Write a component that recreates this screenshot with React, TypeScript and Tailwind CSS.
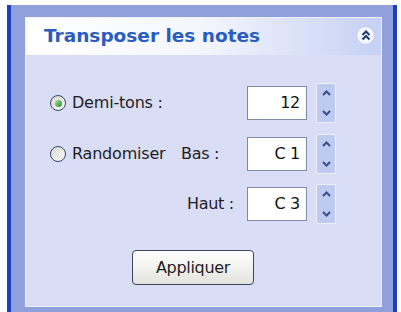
import React from 'react';

const font = { fontFamily: '"DejaVu Sans", Verdana, sans-serif' };

const Chevron = ({ up }: { up?: boolean }) => (
  <svg width="9" height="6" viewBox="0 0 9 6">
    <path
      d={up ? 'M1 5 L4.5 1.5 L8 5' : 'M1 1 L4.5 4.5 L8 1'}
      fill="none"
      stroke="#3a4d8f"
      strokeWidth="2"
    />
  </svg>
);

const Spinner = () => (
  <div className="flex h-[40px] w-[20px] flex-col items-center justify-between rounded-[2px] border border-[#eef1fc] bg-[#bfcaf0] py-[6px]">
    <Chevron up />
    <Chevron />
  </div>
);

const Field = ({ value }: { value: string }) => (
  <div className="flex items-center gap-[9px]">
    <div className="flex h-[34px] w-[60px] items-center justify-end border border-[#7f8aa3] bg-white pr-[6px] text-[16px] tracking-[-0.3px] text-[#111]">
      {value}
    </div>
    <Spinner />
  </div>
);

const Radio = ({ checked, label }: { checked?: boolean; label: string }) => (
  <div className="flex items-center gap-[6px]">
    <div className="flex h-[16px] w-[16px] items-center justify-center rounded-full border-[1.5px] border-[#2f4a6e] bg-gradient-to-br from-[#d8d8d0] to-white">
      {checked && <div className="h-[7px] w-[7px] rounded-full bg-gradient-to-br from-[#9be49b] to-[#1f8f1f]" />}
    </div>
    <span className="text-[16px] tracking-[-0.2px] text-[#1e1e1e]">{label}</span>
  </div>
);

export default function App() {
  return (
    <div className="h-[312px] w-[401px] overflow-hidden bg-white pt-[5px] pl-[7px]" style={font}>
      <div className="h-[320px] w-[390px] border-x-4 border-[#1d3fc2] bg-[#8fa0dc] pt-[12px] pl-[14px] pr-[11px]">
        <div className="border border-[#eef0fb]">
          <div className="flex h-[37px] items-center justify-between bg-gradient-to-r from-white via-[#f4f6fd] to-[#c5d0f3] pl-[18px] pr-[6px]">
            <span className="-mt-[2px] text-[18.5px] font-bold text-[#2a5cc0]">Transposer les notes</span>
            <div className="-mt-[2px] flex h-[19px] w-[19px] items-center justify-center rounded-full border border-[#bfcaea] bg-[#f5f7ff]">
              <svg width="10" height="11" viewBox="0 0 10 11">
                <path d="M1.5 5 L5 1.5 L8.5 5 M1.5 9.5 L5 6 L8.5 9.5" fill="none" stroke="#1d3677" strokeWidth="2" />
              </svg>
            </div>
          </div>
          <div className="h-[251px] bg-[#d9ddf6] pl-[24px] pr-[45px] pt-[28px]">
            <div className="flex items-center">
              <Radio checked label="Demi-tons :" />
              <div className="ml-auto">
                <Field value="12" />
              </div>
            </div>
            <div className="mt-[11px] flex items-center">
              <div className="w-[131px]">
                <Radio label="Randomiser" />
              </div>
              <span className="text-[16px] tracking-[-0.3px] text-[#1e1e1e]">Bas :</span>
              <div className="ml-auto">
                <Field value="C 1" />
              </div>
            </div>
            <div className="mt-[10px] flex items-center">
              <div className="w-[137px]" />
              <span className="text-[16px] tracking-[-0.3px] text-[#1e1e1e]">Haut :</span>
              <div className="ml-auto">
                <Field value="C 3" />
              </div>
            </div>
            <div className="mt-[26px] pl-[82px]">
              <button className="h-[35px] w-[122px] rounded-[4px] border border-[#3b4660] bg-gradient-to-b from-white to-[#e4e4de] text-[16px] tracking-[-0.3px] text-[#1e1e1e]">
                Appliquer
              </button>
            </div>
          </div>
        </div>
      </div>
    </div>
  );
}
